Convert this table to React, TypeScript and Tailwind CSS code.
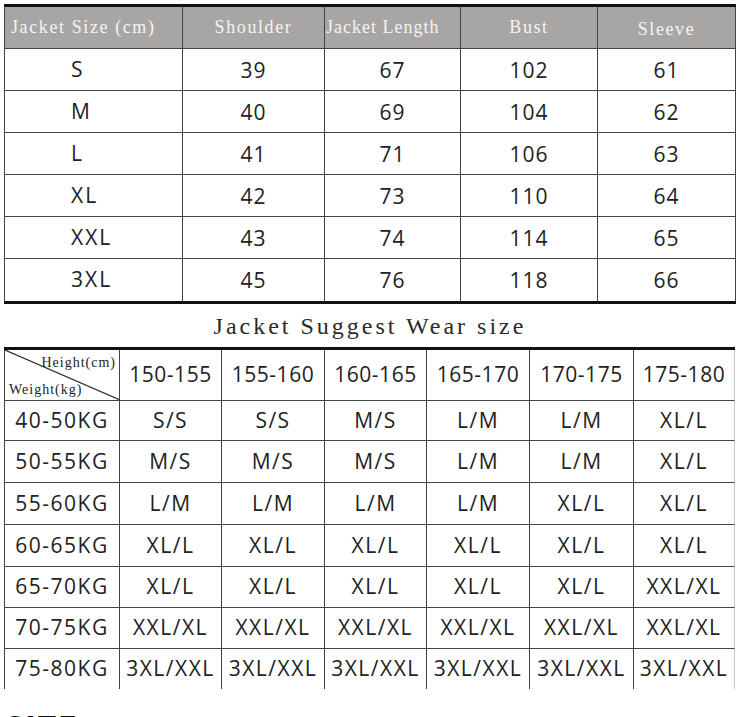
import React from "react";

const sizeRows = [
  ["S", "39", "67", "102", "61"],
  ["M", "40", "69", "104", "62"],
  ["L", "41", "71", "106", "63"],
  ["XL", "42", "73", "110", "64"],
  ["XXL", "43", "74", "114", "65"],
  ["3XL", "45", "76", "118", "66"],
];

const heights = ["150-155", "155-160", "160-165", "165-170", "170-175", "175-180"];

const wearRows: { w: string; h: string; v: string[] }[] = [
  { w: "40-50KG", h: "h-[40px]", v: ["S/S", "S/S", "M/S", "L/M", "L/M", "XL/L"] },
  { w: "50-55KG", h: "h-[42px]", v: ["M/S", "M/S", "M/S", "L/M", "L/M", "XL/L"] },
  { w: "55-60KG", h: "h-[42px]", v: ["L/M", "L/M", "L/M", "L/M", "XL/L", "XL/L"] },
  { w: "60-65KG", h: "h-[42px]", v: ["XL/L", "XL/L", "XL/L", "XL/L", "XL/L", "XL/L"] },
  { w: "65-70KG", h: "h-[41px]", v: ["XL/L", "XL/L", "XL/L", "XL/L", "XL/L", "XXL/XL"] },
  { w: "70-75KG", h: "h-[41px]", v: ["XXL/XL", "XXL/XL", "XXL/XL", "XXL/XL", "XXL/XL", "XXL/XL"] },
  { w: "75-80KG", h: "h-[40px]", v: ["3XL/XXL", "3XL/XXL", "3XL/XXL", "3XL/XXL", "3XL/XXL", "3XL/XXL"] },
];

const serif = "font-['Liberation_Serif','DejaVu_Serif',serif]";
const sans = "font-['Open_Sans','Noto_Sans',sans-serif]";

export default function App() {
  return (
    <div className="w-[743px] h-[717px] overflow-hidden bg-white pl-[4px] pt-[4px] text-[#222]">
      {/* tabela de medidas */}
      <div className="w-[732px] border-t-[3px] border-b-[3px] border-[#111]">
        <div className={`grid grid-cols-[179px_142px_136px_137px_138px] h-[42px] bg-[#a8a6a5] text-[#f4f4f4] text-[18px] tracking-[1.6px] ${serif}`}>
          <div className="flex items-center pl-[6px] border-l border-r border-b border-[#444]">Jacket Size (cm)</div>
          <div className="flex items-center justify-center border-r border-b border-[#444]">Shoulder</div>
          <div className="flex items-center pl-[1px] border-r border-b border-[#444] tracking-[1px]">Jacket Length</div>
          <div className="flex items-center justify-center border-r border-b border-[#444]">Bust</div>
          <div className="flex items-center justify-center border-r border-b border-[#444] pt-[4px]">Sleeve</div>
        </div>
        {sizeRows.map((r, i) => (
          <div
            key={r[0]}
            className={`grid grid-cols-[179px_142px_136px_137px_138px] h-[42px] text-[21px] tracking-[1px] ${sans}`}
          >
            {r.map((c, j) => (
              <div
                key={j}
                className={`flex items-center border-r border-[#444] ${i < sizeRows.length - 1 ? "border-b" : ""} ${
                  j === 0 ? "border-l pl-[66px] tracking-[2px]" : "justify-center pt-[2px]"
                }`}
              >
                {c}
              </div>
            ))}
          </div>
        ))}
      </div>

      <div className={`w-[732px] h-[43px] flex items-center justify-center text-[24px] tracking-[3px] text-[#2a2a2a] ${serif}`}>
        Jacket Suggest Wear size
      </div>

      {/* tabela de sugestão */}
      <div className="w-[731px] border-t-[3px] border-[#111]">
        <div className={`grid grid-cols-[116px_102px_103px_102px_103px_104px_101px] h-[51px] text-[21px] tracking-[0.5px] ${sans}`}>
          <div className={`relative flex flex-col justify-between border-l border-r border-b border-[#444] px-[3px] pt-[6px] pb-[3px] text-[14px] tracking-[1px] text-[#222] ${serif}`}>
            <svg className="absolute inset-0" width="115" height="50" viewBox="0 0 115 50">
              <line x1="0" y1="0" x2="115" y2="50" stroke="#333" strokeWidth="1.2" />
            </svg>
            <span className="self-end leading-none">Height(cm)</span>
            <span className="self-start leading-none pl-[1px]">Weight(kg)</span>
          </div>
          {heights.map((h, j) => (
            <div
              key={h}
              className={`flex items-center justify-center border-b border-b-[#444] ${j === heights.length - 1 ? "border-r border-r-[#c8c8c8]" : "border-r border-r-[#444]"}`}
            >
              {h}
            </div>
          ))}
        </div>
        {wearRows.map((r, i) => (
          <div
            key={r.w}
            className={`grid grid-cols-[116px_102px_103px_102px_103px_104px_101px] ${r.h} text-[21px] tracking-[1.5px] ${sans}`}
          >
            <div className={`flex items-center justify-center border-l border-r border-[#444] ${i < wearRows.length - 1 ? "border-b" : ""}`}>
              {r.w}
            </div>
            {r.v.map((c, j) => (
              <div
                key={j}
                className={`flex items-center justify-center ${j === r.v.length - 1 ? "border-r border-r-[#c8c8c8]" : "border-r border-r-[#444]"} ${
                  i < wearRows.length - 1 ? "border-b border-b-[#444]" : ""
                }`}
              >
                {c}
              </div>
            ))}
          </div>
        ))}
      </div>

      <div className={`mt-[21px] pl-[1px] text-[34px] font-bold leading-none tracking-[1px] text-[#111] ${sans}`}>SIZE</div>
    </div>
  );
}
